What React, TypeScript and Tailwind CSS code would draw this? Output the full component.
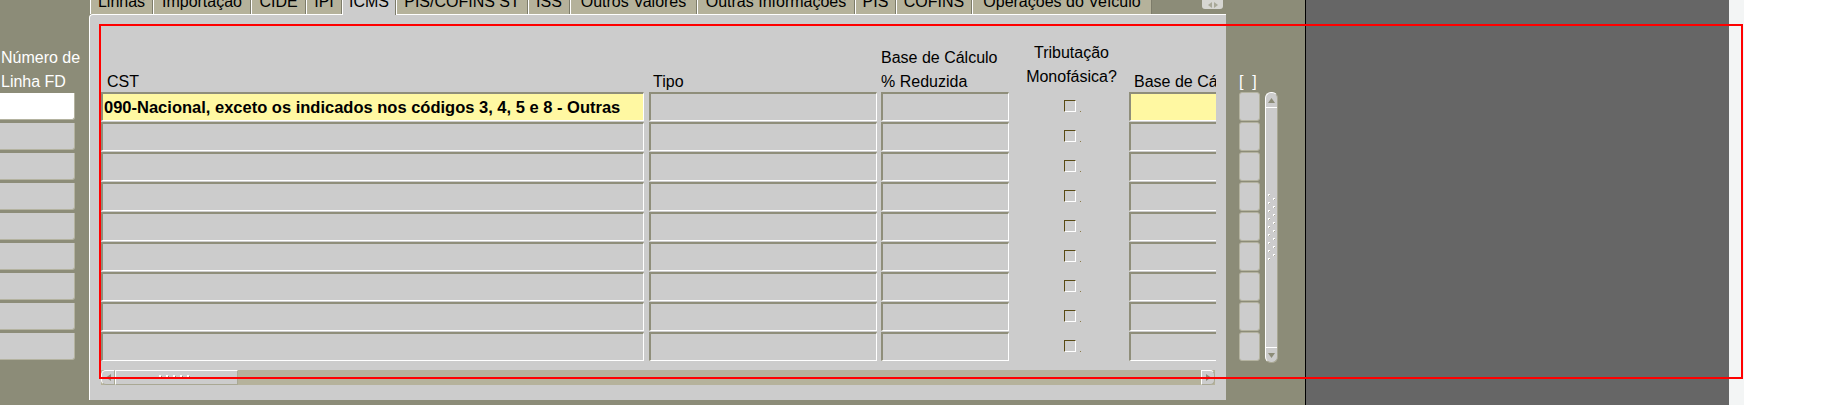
import React from 'react';

const rows = Array.from({ length: 9 }, (_, i) => i);

const tabs = [
  { label: 'Linhas', w: 'w-[63px]' },
  { label: 'Importação', w: 'w-[98px]' },
  { label: 'CIDE', w: 'w-[55px]' },
  { label: 'IPI', w: 'w-[36px]' },
  { label: 'ICMS', w: 'w-[54px]', active: true },
  { label: 'PIS/COFINS ST', w: 'w-[132px]' },
  { label: 'ISS', w: 'w-[42px]' },
  { label: 'Outros Valores', w: 'w-[127px]' },
  { label: 'Outras Informações', w: 'w-[158px]' },
  { label: 'PIS', w: 'w-[41px]' },
  { label: 'COFINS', w: 'w-[76px]' },
  { label: 'Operações do Veículo', w: 'w-[180px]' },
];

const fieldBase =
  'h-[29px] shrink-0 border-t-2 border-l-2 border-b border-r border-t-[#8f8e7a] border-l-[#8f8e7a] border-b-white border-r-white';

const Field: React.FC<{ w: string; yellow?: boolean; children?: React.ReactNode }> = ({ w, yellow, children }) => (
  <div className={`${fieldBase} ${w} ${yellow ? 'bg-[#fff8a2]' : 'bg-[#cccccc]'}`}>{children}</div>
);

const Check: React.FC = () => (
  <div className="flex h-[29px] w-[120px] shrink-0 items-start pl-[55px] pt-[8px]">
    <div className="h-[12px] w-[12px] border-t border-l border-b border-r border-t-[#584a14] border-l-[#584a14] border-b-white border-r-white" />
    <div className="ml-[4px] mt-[11px] h-[1px] w-[1px] bg-[#8c7a4a]" />
  </div>
);

const Tabs: React.FC = () => (
  <div className="flex h-[14px] items-end pl-[1px]">
    {tabs.map(t =>
      t.active ? (
        <div
          key={t.label}
          className={`${t.w} relative z-10 -mb-[1px] h-[25px] shrink-0 rounded-tl-[4px] border-l border-r border-l-white border-r-[#7d7c6a] bg-[#cccccc] text-center leading-[24px]`}
        >
          {t.label}
        </div>
      ) : (
        <div
          key={t.label}
          className={`${t.w} h-[24px] shrink-0 border-l border-r border-l-white border-r-[#7d7c6a] bg-[#b5b29b] text-center leading-[24px]`}
        >
          {t.label}
        </div>
      )
    )}
    <div className="mr-[3px] ml-auto flex h-[9px] w-[21px] items-center justify-center gap-[2px] self-start rounded-b-[3px] bg-[#d6d6d2]">
      <svg width="4" height="6" viewBox="0 0 4 6"><path d="M4 0 L0 3 L4 6Z" fill="#a8a898" /></svg>
      <svg width="4" height="6" viewBox="0 0 4 6"><path d="M0 0 L4 3 L0 6Z" fill="#a8a898" /></svg>
    </div>
  </div>
);

const HScroll: React.FC = () => (
  <div className="mt-[9px] flex h-[15px] w-[1114px] bg-[#b5b29b]">
    <div className="flex h-[15px] w-[14px] items-center justify-center rounded-l-[5px] border-t border-l border-b border-r border-t-white border-l-white border-b-[#a9a894] border-r-[#a9a894] bg-[#cccccc]">
      <svg width="5" height="7" viewBox="0 0 5 7"><path d="M5 0 L0 3.5 L5 7Z" fill="#8c8c78" /></svg>
    </div>
    <div className="flex h-[15px] w-[123px] items-center justify-center border-t border-l border-b border-r border-t-white border-l-white border-b-[#a9a894] border-r-[#a9a894] bg-[#cccccc]">
      <svg width="36" height="5" viewBox="0 0 36 5">
        {[0, 7, 14, 21, 28].map(x => (
          <g key={x}>
            <rect x={x + 1} y={1} width={2} height={2} fill="#8c8c78" />
            <rect x={x} y={0} width={2} height={2} fill="#ffffff" />
          </g>
        ))}
      </svg>
    </div>
    <div className="flex-1" />
    <div className="flex h-[15px] w-[14px] items-center justify-center rounded-r-[5px] border-t border-l border-b border-r border-t-white border-l-white border-b-[#a9a894] border-r-[#a9a894] bg-[#cccccc]">
      <svg width="5" height="7" viewBox="0 0 5 7"><path d="M0 0 L5 3.5 L0 7Z" fill="#8c8c78" /></svg>
    </div>
  </div>
);

const VScroll: React.FC = () => (
  <div className="ml-[5px] flex h-[271px] w-[13px] flex-col rounded-[6px] border-l border-r border-t border-b border-l-white border-t-white border-r-[#a9a894] border-b-[#a9a894] bg-[#cccccc]">
    <div className="flex h-[15px] items-center justify-center border-b border-b-white">
      <svg width="7" height="5" viewBox="0 0 7 5"><path d="M0 5 L3.5 0 L7 5Z" fill="#8c8c78" /></svg>
    </div>
    <div className="flex flex-1 items-center justify-center">
      <svg width="8" height="68" viewBox="0 0 8 68">
        {Array.from({ length: 9 }, (_, i) => (
          <g key={i}>
            <rect x={0} y={i * 8} width={2} height={2} fill="#ffffff" />
            <rect x={1} y={i * 8 + 1} width={1} height={1} fill="#a9a894" />
            <rect x={5} y={i * 8 + 4} width={2} height={2} fill="#ffffff" />
            <rect x={6} y={i * 8 + 5} width={1} height={1} fill="#a9a894" />
          </g>
        ))}
      </svg>
    </div>
    <div className="flex h-[15px] items-center justify-center border-t border-t-white">
      <svg width="7" height="5" viewBox="0 0 7 5"><path d="M0 0 L3.5 5 L7 0Z" fill="#8c8c78" /></svg>
    </div>
  </div>
);

const App: React.FC = () => {
  return (
    <div className="relative flex h-[405px] w-[1844px] overflow-hidden font-['Liberation_Sans',Arial,sans-serif] text-[16px] text-black">
      {/* form area */}
      <div className="flex h-[405px] w-[1305px] shrink-0 bg-[#8c8c78]">
        {/* left block */}
        <div className="w-[89px] shrink-0">
          <div className="pt-[46px] pl-[1px] leading-[24px] text-white">
            <div>Número de</div>
            <div>Linha FD</div>
          </div>
          <div className="-mt-[1px] flex flex-col gap-[3px]">
            {rows.map(i => (
              <div
                key={i}
                className={`h-[27px] w-[75px] rounded-br-[3px] border-b border-r border-[#b4b3a0] ${i === 0 ? 'bg-white' : 'bg-[#cccccc]'}`}
              />
            ))}
          </div>
        </div>

        {/* tabbed panel */}
        <div className="w-[1137px] shrink-0">
          <Tabs />
          <div className="h-[386px] rounded-tl-[4px] border-l border-t border-white bg-[#cccccc] pl-[11px]">
            <div className="w-[1115px] overflow-hidden">
              <div className="flex h-[77px] w-[1200px] items-end">
                <div className="-mb-[2px] w-[548px] shrink-0 pl-[6px] leading-[24px]">CST</div>
                <div className="-mb-[2px] w-[232px] shrink-0 pl-[4px] leading-[24px]">Tipo</div>
                <div className="-mb-[2px] w-[128px] shrink-0 leading-[24px]">
                  <div>Base de Cálculo</div>
                  <div>% Reduzida</div>
                </div>
                <div className="mb-[3px] w-[120px] shrink-0 pl-[5px] text-center leading-[24px]">
                  <div>Tributação</div>
                  <div>Monofásica?</div>
                </div>
                <div className="-mb-[2px] w-[87px] shrink-0 overflow-hidden whitespace-nowrap pl-[5px] leading-[24px]">Base de Cálculo</div>
              </div>
              <div className="flex w-[1200px] flex-col gap-[1px]">
                {rows.map(i => (
                  <div key={i} className="flex">
                    <Field w="w-[543px]" yellow={i === 0}>
                      {i === 0 && (
                        <div className="pl-[1px] text-[16.5px] font-bold leading-[26px]">
                          090-Nacional, exceto os indicados nos códigos 3, 4, 5 e 8 - Outras
                        </div>
                      )}
                    </Field>
                    <div className="w-[5px] shrink-0" />
                    <Field w="w-[228px]" />
                    <div className="w-[4px] shrink-0" />
                    <Field w="w-[128px]" />
                    <Check />
                    <Field w="w-[128px]" yellow={i === 0} />
                  </div>
                ))}
              </div>
            </div>
            <HScroll />
          </div>
        </div>

        {/* record indicator + scrollbar */}
        <div className="w-[79px] shrink-0 pl-[13px]">
          <div className="h-[94px] pt-[70px] leading-[24px] text-white">[&nbsp;&nbsp;]</div>
          <div className="-mt-[2px] flex">
            <div className="flex w-[21px] flex-col gap-[1px]">
              {rows.map(i => (
                <div key={i} className="h-[29px] w-[21px] rounded-[3px] border border-[#b4b3a0] bg-[#cccccc]" />
              ))}
            </div>
            <VScroll />
          </div>
        </div>
      </div>

      <div className="w-[1px] shrink-0 bg-black" />
      <div className="w-[423px] shrink-0 bg-[#666666]" />
      <div className="w-[15px] shrink-0 bg-[#f3f5f5]" />
      <div className="flex-1 bg-white" />

      {/* red highlight annotation */}
      <div className="pointer-events-none absolute left-[99px] top-[24px] h-[355px] w-[1644px] border-2 border-[#ff0000]" />
    </div>
  );
};

export default App;
